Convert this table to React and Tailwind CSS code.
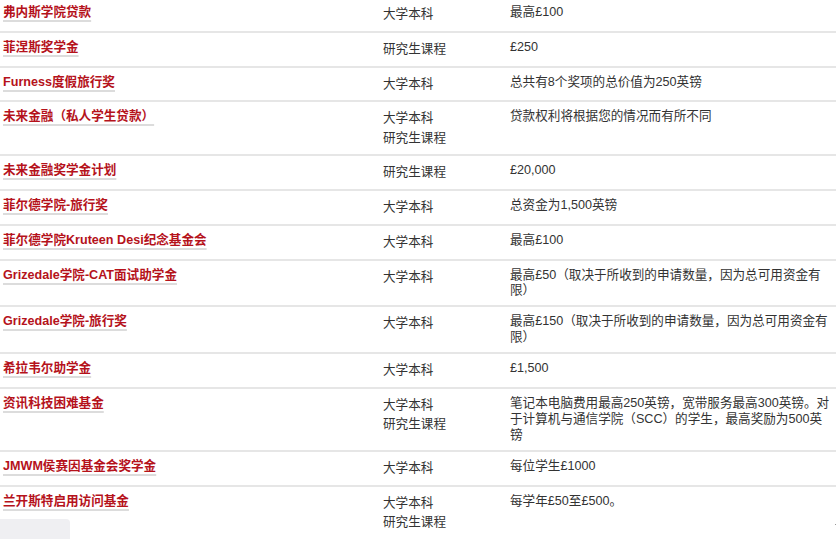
import React from "react";

/* ===========================
   DATA
=========================== */

const rows = [
  { name: "弗内斯学院贷款", levels: ["大学本科"], amount: "最高£100" },
  { name: "菲涅斯奖学金", levels: ["研究生课程"], amount: "£250" },
  { name: "Furness度假旅行奖", levels: ["大学本科"], amount: "总共有8个奖项的总价值为250英镑" },
  { name: "未来金融（私人学生贷款）", levels: ["大学本科", "研究生课程"], amount: "贷款权利将根据您的情况而有所不同" },
  { name: "未来金融奖学金计划", levels: ["研究生课程"], amount: "£20,000" },
  { name: "菲尔德学院-旅行奖", levels: ["大学本科"], amount: "总资金为1,500英镑" },
  { name: "菲尔德学院Kruteen Desi纪念基金会", levels: ["大学本科"], amount: "最高£100" },
  { name: "Grizedale学院-CAT面试助学金", levels: ["大学本科"], amount: "最高£50（取决于所收到的申请数量，因为总可用资金有限）" },
  { name: "Grizedale学院-旅行奖", levels: ["大学本科"], amount: "最高£150（取决于所收到的申请数量，因为总可用资金有限）" },
  { name: "希拉韦尔助学金", levels: ["大学本科"], amount: "£1,500" },
  {
    name: "资讯科技困难基金",
    levels: ["大学本科", "研究生课程"],
    amount: "笔记本电脑费用最高250英镑，宽带服务最高300英镑。对于计算机与通信学院（SCC）的学生，最高奖励为500英镑",
  },
  { name: "JMWM侯赛因基金会奖学金", levels: ["大学本科"], amount: "每位学生£1000" },
  { name: "兰开斯特启用访问基金", levels: ["大学本科", "研究生课程"], amount: "每学年£50至£500。" },
];

/* ===========================
   ROW
=========================== */

const FundingRow = ({ row, first }) => (
  <div
    className={
      first
        ? "flex pt-[5.4px] pb-[6.4px]"
        : "flex border-t-2 border-[#e6e6e6] pt-[7px] pb-[6.4px]"
    }
  >
    <div className="w-[380px] shrink-0 pl-[3px] leading-[15.8px]">
      <a className="font-bold text-[#b5121b] underline decoration-[#dcdcdc] decoration-[1.5px] underline-offset-[3.5px]">
        {row.name}
      </a>
    </div>
    <div className="w-[127px] shrink-0 pl-[3px] leading-[19.3px] text-[#333]">
      {row.levels.map((l, i) => (
        <div key={i}>{l}</div>
      ))}
    </div>
    <div className="w-[329px] shrink-0 pl-[3px] pr-[4px] leading-[15.8px] text-[#333]">
      {row.amount}
    </div>
  </div>
);

/* ===========================
   PAGE
=========================== */

export default function App() {
  return (
    <div
      className="relative w-[837px] h-[539px] overflow-hidden bg-white text-[12.6px]"
      style={{ fontFamily: '"Liberation Sans", "Noto Sans CJK SC", sans-serif' }}
    >
      <div className="w-[836px]">
        {rows.map((row, i) => (
          <FundingRow key={i} row={row} first={i === 0} />
        ))}
      </div>

      {/* partial overlay tab at bottom-left */}
      <div className="absolute left-0 top-[519px] w-[70px] h-[20px] rounded-tr-[4px] bg-[#efeff2]" />
      <div className="absolute left-[835px] top-[524px] w-[1px] h-[1px] bg-[#999]" />
    </div>
  );
}
